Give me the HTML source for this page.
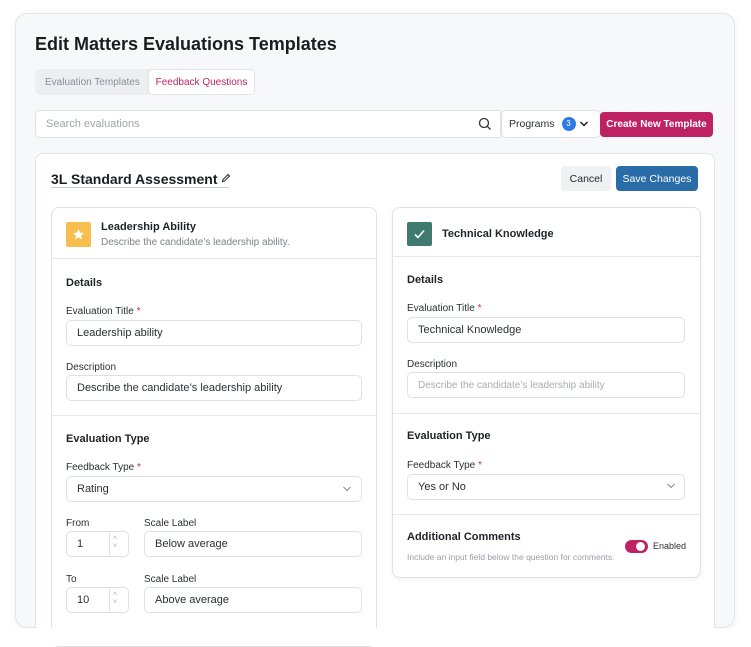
<!DOCTYPE html>
<html><head><meta charset="utf-8"><style>
*{box-sizing:border-box;margin:0;padding:0}
body{width:751px;height:646px;background:#fff;font-family:"Liberation Sans",sans-serif;color:#1f2328;position:relative;overflow:hidden}
.a{position:absolute}
.outer{left:15px;top:13px;width:720px;height:615px;background:#f7f8fa;border:1px solid #e2e4e8;border-radius:12px;box-shadow:0 2px 8px rgba(0,0,0,.06);overflow:hidden}
.inp{position:absolute;background:#fff;border:1px solid #dfe1e5;border-radius:5px;font-size:11px;color:#2b2f33;padding-left:10px;display:flex;align-items:center}
.lbl{position:absolute;font-size:10px;color:#2b2f33}
.req{color:#d0284f}
.h{position:absolute;font-size:11px;font-weight:bold;color:#1f2328}
.panel{position:absolute;background:#fff;border:1px solid #dfe1e5;border-radius:8px}
.sep{position:absolute;height:1px;background:#e4e6ea}
</style></head><body>
<div class="a outer"></div>
<div class="a" style="left:35px;top:34px;font-size:18px;font-weight:bold;color:#1a1d21">Edit Matters Evaluations Templates</div>
<div class="a" style="left:35px;top:69px;width:220px;height:26px;background:#eceef1;border-radius:5px"></div>
<div class="a" style="left:45px;top:77px;font-size:10px;color:#8a8f96">Evaluation Templates</div>
<div class="a" style="left:148px;top:69px;width:107px;height:26px;background:#fff;border:1px solid #e2e4e8;border-radius:5px;font-size:10px;color:#c0245f;text-align:center;line-height:26px">Feedback Questions</div>
<div class="inp" style="left:35px;top:110px;width:466px;height:28px;color:#a0a4aa;border-radius:5px 0 0 5px">Search evaluations</div>
<svg class="a" style="left:478px;top:117px" width="14" height="14" viewBox="0 0 14 14"><circle cx="6" cy="6" r="4.5" fill="none" stroke="#333" stroke-width="1.3"/><path d="M9.3 9.3L12.5 12.5" stroke="#333" stroke-width="1.3"/></svg>
<div class="inp" style="left:501px;top:110px;width:100px;height:28px;font-size:10.5px;padding-left:7px">Programs<span style="display:inline-block;width:14px;height:14px;border-radius:7px;background:#2d7be5;color:#fff;font-size:8px;text-align:center;line-height:14px;margin-left:7px">3</span></div>
<svg class="a" style="left:579px;top:120px" width="10" height="8" viewBox="0 0 10 8"><path d="M1.5 2L5 5.5 8.5 2" fill="none" stroke="#222" stroke-width="1.5"/></svg>
<div class="a" style="left:600px;top:112px;width:113px;height:25px;background:#bf2262;border-radius:4px;color:#fff;font-size:10px;font-weight:bold;text-align:center;line-height:25px">Create New Template</div>
<div class="a" style="left:35px;top:153px;width:680px;height:490px;background:#fff;border:1px solid #e2e4e8;border-radius:8px"></div>
<div class="a" style="left:51px;top:171px;font-size:14px;font-weight:bold;color:#1a1d21">3L Standard Assessment</div>
<div class="a" style="left:51px;top:187px;width:178px;height:1px;background:#ccc"></div>
<svg class="a" style="left:221px;top:173px" width="10" height="10" viewBox="0 0 10 10"><path d="M1.5 8.5L2 6.5 7 1.5 8.5 3 3.5 8z" fill="none" stroke="#333" stroke-width="1.1"/></svg>
<div class="a" style="left:561px;top:166px;width:50px;height:25px;background:#f0f1f3;border-radius:4px;font-size:10.5px;text-align:center;line-height:26px">Cancel</div>
<div class="a" style="left:616px;top:166px;width:82px;height:25px;background:#2a6ca8;border-radius:4px;font-size:10.5px;color:#fff;text-align:center;line-height:26px">Save Changes</div>

<div class="panel" style="left:51px;top:207px;width:326px;height:440px"></div>
<div class="sep" style="left:51px;top:258px;width:326px"></div>
<div class="a" style="left:66px;top:222px;width:25px;height:25px;background:#f8be4f;border-radius:2px"></div>
<svg class="a" style="left:72px;top:228px" width="13" height="13" viewBox="0 0 24 24"><path d="M12 2l3 6.5 7 .8-5.2 4.8 1.4 7L12 17.6 5.8 21l1.4-7L2 9.3l7-.8z" fill="#fff"/></svg>
<div class="h" style="left:101px;top:221px">Leadership Ability</div>
<div class="a" style="left:101px;top:237px;font-size:10px;color:#7d8288">Describe the candidate’s leadership ability.</div>
<div class="h" style="left:66px;top:277px">Details</div>
<div class="lbl" style="left:66px;top:306px">Evaluation Title <span class="req">*</span></div>
<div class="inp" style="left:66px;top:320px;width:296px;height:26px">Leadership ability</div>
<div class="lbl" style="left:66px;top:362px">Description</div>
<div class="inp" style="left:66px;top:375px;width:296px;height:26px">Describe the candidate’s leadership ability</div>
<div class="sep" style="left:51px;top:415px;width:326px"></div>
<div class="h" style="left:66px;top:433px">Evaluation Type</div>
<div class="lbl" style="left:66px;top:462px">Feedback Type <span class="req">*</span></div>
<div class="inp" style="left:66px;top:476px;width:296px;height:26px">Rating</div>
<svg class="a" style="left:342px;top:485px" width="10" height="8" viewBox="0 0 10 8"><path d="M1.5 2L5 5.5 8.5 2" fill="none" stroke="#888" stroke-width="1"/></svg>
<div class="lbl" style="left:66px;top:518px">From</div>
<div class="lbl" style="left:144px;top:518px">Scale Label</div>
<div class="inp" style="left:66px;top:531px;width:63px;height:26px">1</div>
<div class="a" style="left:109px;top:532px;width:1px;height:24px;background:#dfe1e5"></div>
<div class="a" style="left:113px;top:535px;font-size:7px;color:#aaa;line-height:8px">˄<br>˅</div>
<div class="inp" style="left:144px;top:531px;width:218px;height:26px">Below average</div>
<div class="lbl" style="left:66px;top:574px">To</div>
<div class="lbl" style="left:144px;top:574px">Scale Label</div>
<div class="inp" style="left:66px;top:587px;width:63px;height:26px">10</div>
<div class="a" style="left:109px;top:588px;width:1px;height:24px;background:#dfe1e5"></div>
<div class="a" style="left:113px;top:591px;font-size:7px;color:#aaa;line-height:8px">˄<br>˅</div>
<div class="inp" style="left:144px;top:587px;width:218px;height:26px">Above average</div>

<div class="panel" style="left:392px;top:207px;width:309px;height:371px;box-shadow:0 2px 6px rgba(0,0,0,.05)"></div>
<div class="sep" style="left:392px;top:256px;width:309px"></div>
<div class="a" style="left:407px;top:222px;width:25px;height:24px;background:#3f7a6e;border-radius:2px"></div>
<svg class="a" style="left:412px;top:227px" width="15" height="14" viewBox="0 0 15 14"><path d="M3 7.5l3 3 6-7" fill="none" stroke="#fff" stroke-width="1.6"/></svg>
<div class="h" style="left:442px;top:228px">Technical Knowledge</div>
<div class="h" style="left:407px;top:274px">Details</div>
<div class="lbl" style="left:407px;top:303px">Evaluation Title <span class="req">*</span></div>
<div class="inp" style="left:407px;top:317px;width:278px;height:26px">Technical Knowledge</div>
<div class="lbl" style="left:407px;top:359px">Description</div>
<div class="inp" style="left:407px;top:372px;width:278px;height:26px;color:#a9adb3;font-size:10px">Describe the candidate’s leadership ability</div>
<div class="sep" style="left:392px;top:413px;width:309px"></div>
<div class="h" style="left:407px;top:430px">Evaluation Type</div>
<div class="lbl" style="left:407px;top:460px">Feedback Type <span class="req">*</span></div>
<div class="inp" style="left:407px;top:474px;width:278px;height:26px">Yes or No</div>
<svg class="a" style="left:666px;top:482px" width="10" height="8" viewBox="0 0 10 8"><path d="M1.5 2L5 5.5 8.5 2" fill="none" stroke="#888" stroke-width="1"/></svg>
<div class="sep" style="left:392px;top:514px;width:309px"></div>
<div class="h" style="left:407px;top:531px">Additional Comments</div>
<div class="a" style="left:407px;top:552px;font-size:8.5px;color:#9a9ea4">Include an input field below the question for comments.</div>
<div class="a" style="left:625px;top:540px;width:23px;height:13px;background:#bf2262;border-radius:7px"></div>
<div class="a" style="left:636px;top:542px;width:9px;height:9px;background:#fff;border-radius:5px"></div>
<div class="a" style="left:653px;top:541px;font-size:9px;color:#2b2f33">Enabled</div>
<div class="a" style="left:0;top:628px;width:751px;height:18px;background:#fff"></div>
</body></html>
